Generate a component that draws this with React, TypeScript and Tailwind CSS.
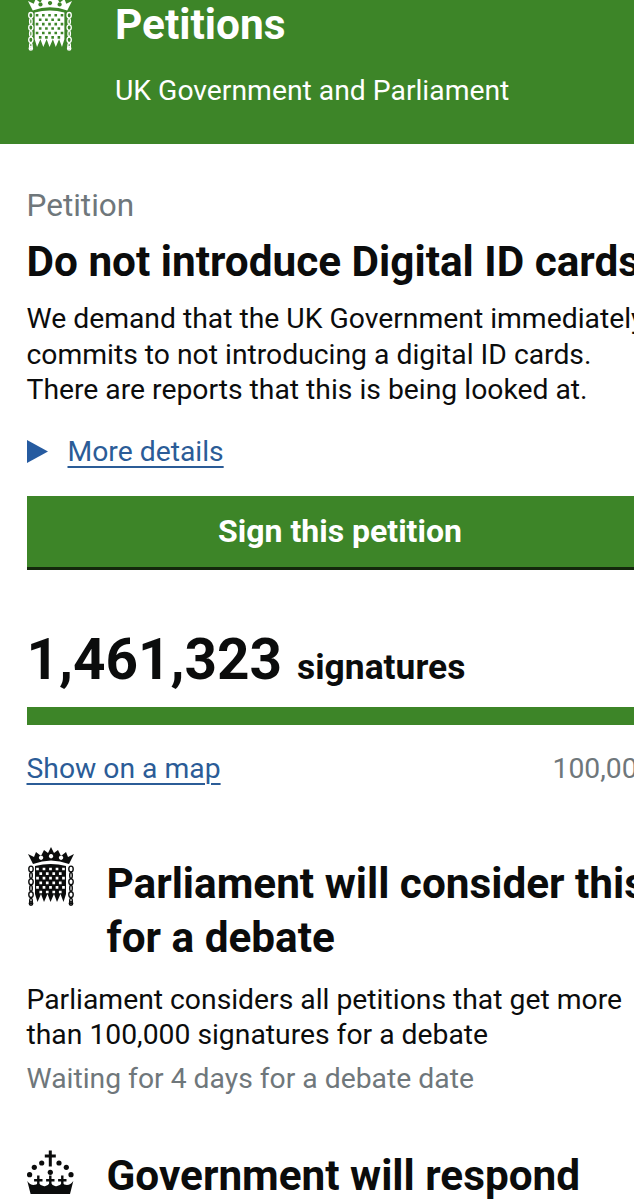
const F = { fontFamily: "Roboto, sans-serif" };

function holes() {
  let d = "M8 19 Q24 15 39 19 V47 L36.5 55 L33.5 47 L30 55 L27 47 L23.5 55 L20.5 47 L17 55 L14 47 L10.5 55 L8 47 Z";
  for (let r = 0; r < 6; r++) {
    const n = r % 2 ? 4 : 5;
    for (let c = 0; c < n; c++) {
      const x = 10.5 + c * 6.5 + (r % 2 ? 3.25 : 0);
      const y = 22 + r * 4.6;
      const s = 1.35;
      d += ` M${x - s} ${y - s} h${2 * s} v${2 * s} h${-2 * s} Z`;
    }
  }
  return d;
}

function Chain({ x }: { x: number }) {
  return (
    <g fill="none" stroke="currentColor" strokeWidth="1.4">
      {[0, 1, 2, 3, 4, 5].map((i) => (
        <ellipse key={i} cx={x} cy={22 + i * 6.4} rx={i % 2 ? 1.3 : 2.2} ry="2.9" />
      ))}
      <circle cx={x} cy={56.5} r="1.7" />
    </g>
  );
}

function Portcullis({ className }: { className?: string }) {
  return (
    <svg viewBox="0 0 48 59" className={className} fill="currentColor">
      <path d="M1 7 L7 10 L9 5 L14 9 L17 3 L21 6 L24 0 L27 6 L31 3 L34 9 L39 5 L41 10 L47 7 L42 17 Q24 10 6 17 Z M14 8.5 a2.2 2.2 0 1 0 .1 0 Z M24 7 a2.2 2.2 0 1 0 .1 0 Z M34 8.5 a2.2 2.2 0 1 0 .1 0 Z" fillRule="evenodd" />
      <path d={holes()} fillRule="evenodd" />
      <Chain x={4} />
      <Chain x={44} />
    </svg>
  );
}

function Fleur({ x }: { x: number }) {
  return (
    <path d={`M${x - 1.2} 26.5 h2.4 v3.5 h3 v2.4 h-3 v6 h-2.4 v-6 h-3 v-2.4 h3 Z`} />
  );
}

function Crown({ className }: { className?: string }) {
  return (
    <svg viewBox="0 0 47 46" className={className} fill="currentColor">
      <path d="M21.8 1.5 h3 v4 h4 v3 h-4 v9 h-3 v-9 h-4 v-3 h4 Z" />
      <circle cx="14.7" cy="14" r="2.6" />
      <circle cx="32" cy="14" r="2.6" />
      <circle cx="7.3" cy="18.3" r="2.6" />
      <circle cx="39.3" cy="18.3" r="2.6" />
      <circle cx="2.6" cy="25.7" r="2.6" />
      <circle cx="44" cy="25.7" r="2.6" />
      <circle cx="23.3" cy="23.3" r="2.6" />
      <Fleur x={11.3} />
      <Fleur x={23.3} />
      <Fleur x={35.3} />
      <path d="M0.3 32 Q3 36 6.5 36 Q9.5 36 11.3 34 Q15 38 18.5 37 Q21.5 36 23.3 33.5 Q25 36 28 37 Q31.5 38 35.3 34 Q37 36 40 36 Q43.5 36 46.3 32 L43 45 H3.6 Z" />
    </svg>
  );
}

export default function App() {
  return (
    <div className="w-[634px] h-[1200px] overflow-hidden bg-white" style={F}>
      <header className="h-[144px] bg-[#3d8528] text-white flex pl-[26.5px] overflow-hidden">
        <Portcullis className="w-[46px] h-[57px] -mt-[6px] shrink-0" />
        <div className="ml-[42.5px] -mt-[1px]">
          <div className="text-[42.4px] leading-[52px] font-bold">Petitions</div>
          <div className="text-[28.3px] leading-[32px] mt-[24px] whitespace-nowrap">UK Government and Parliament</div>
        </div>
      </header>

      <main className="w-[680px] px-[26.5px] pt-[44px]">
        <div className="text-[31.5px] leading-[36px] text-[#6f777b]">Petition</div>
        <h1 className="text-[42.3px] leading-[44px] font-bold text-[#0b0c0c] mt-[16px] whitespace-nowrap">Do not introduce Digital ID cards</h1>
        <p className="text-[28.3px] leading-[35.5px] text-[#0b0c0c] mt-[17px] whitespace-nowrap">
          We demand that the UK Government immediately
          <br />
          commits to not introducing a digital ID cards.
          <br />
          There are reports that this is being looked at.
        </p>

        <div className="flex items-center mt-[26px] h-[36px]">
          <svg viewBox="0 0 21 23" className="w-[21px] h-[23px] text-[#265ba0]" fill="currentColor">
            <path d="M0 0 L21 11.5 L0 23 Z" />
          </svg>
          <a className="ml-[20px] text-[28.3px] leading-[32px] text-[#2b5c97] underline underline-offset-[5px] decoration-[2px]">More details</a>
        </div>

        <button className="mt-[26px] w-full h-[74px] bg-[#3d8528] border-b-[3px] border-[#14280c] text-white text-[32px] font-bold flex items-center justify-center">
          Sign this petition
        </button>

        <div className="flex items-baseline mt-[52px] text-[#0b0c0c] font-bold">
          <span className="text-[56.7px] leading-[76px]">1,461,323</span>
          <span className="text-[35.4px] ml-[15px]">signatures</span>
        </div>

        <div className="h-[18px] bg-[#3d8528] mt-[9px]" />

        <div className="flex justify-between items-center mt-[26px] text-[28.3px] leading-[36px]">
          <a className="text-[#2b5c97] underline underline-offset-[5px] decoration-[2px]">Show on a map</a>
          <span className="text-[#6f777b]">100,000</span>
        </div>

        <section className="flex mt-[62px]">
          <Portcullis className="w-[48px] h-[59px] shrink-0 text-[#0b0c0c] -mt-[2px]" />
          <h2 className="ml-[32px] text-[42.3px] leading-[54px] font-bold text-[#0b0c0c] whitespace-nowrap mt-[8px]">
            Parliament will consider this
            <br />
            for a debate
          </h2>
        </section>
        <p className="text-[28.3px] leading-[35px] text-[#0b0c0c] mt-[17px] whitespace-nowrap">
          Parliament considers all petitions that get more
          <br />
          than 100,000 signatures for a debate
        </p>
        <p className="text-[28.3px] leading-[35px] text-[#6f777b] mt-[9px]">Waiting for 4 days for a debate date</p>

        <section className="flex mt-[53px] items-start">
          <Crown className="w-[47px] h-[46px] shrink-0 text-[#0b0c0c]" />
          <h2 className="ml-[33px] text-[42.3px] leading-[54px] font-bold text-[#0b0c0c] whitespace-nowrap">Government will respond</h2>
        </section>
      </main>
    </div>
  );
}
